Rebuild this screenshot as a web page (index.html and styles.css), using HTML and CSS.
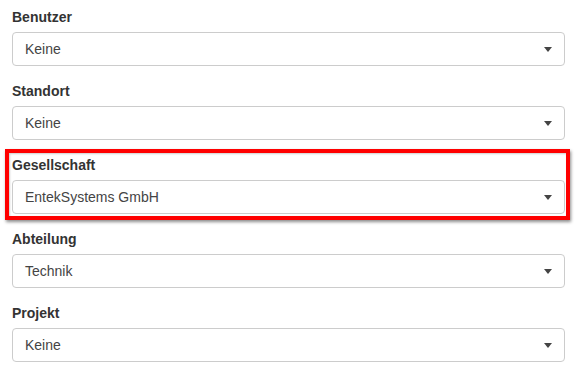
FILE: index.html
```html
<!DOCTYPE html>
<html lang="de">
<head>
  <meta charset="UTF-8" />
  <meta name="viewport" content="width=device-width, initial-scale=1.0"/>
  <title>Zuordnung</title>
  <link rel="stylesheet" href="styles.css">
</head>
<body>
  <form class="assign-form">
    <div class="form-group">
      <label>Benutzer</label>
      <div class="select-box"><span class="select-value">Keine</span><b class="select-arrow"></b></div>
    </div>
    <div class="form-group">
      <label>Standort</label>
      <div class="select-box"><span class="select-value">Keine</span><b class="select-arrow"></b></div>
    </div>
    <!-- markiertes Feld -->
    <div class="form-group highlight">
      <label>Gesellschaft</label>
      <div class="select-box"><span class="select-value">EntekSystems GmbH</span><b class="select-arrow"></b></div>
    </div>
    <div class="form-group">
      <label>Abteilung</label>
      <div class="select-box"><span class="select-value">Technik</span><b class="select-arrow"></b></div>
    </div>
    <div class="form-group">
      <label>Projekt</label>
      <div class="select-box"><span class="select-value">Keine</span><b class="select-arrow"></b></div>
    </div>
  </form>
</body>
</html>
```

FILE: styles.css
```css
body {
  margin: 0;
  padding: 0;
  background: #fff;
  font-family: "Liberation Sans", Arial, sans-serif;
  font-size: 14px;
  color: #333;
}
.assign-form {
  padding: 7px 12px 0 12px;
}
.form-group {
  margin-bottom: 15px;
  position: relative;
}
.form-group label {
  display: block;
  font-weight: bold;
  line-height: 20px;
  margin-bottom: 5px;
}
.select-box {
  position: relative;
  height: 34px;
  box-sizing: border-box;
  border: 1px solid #ccc;
  border-radius: 4px;
  background: #fff;
  padding: 0 24px 0 12px;
  display: flex;
  align-items: center;
}
.select-value {
  color: #444;
  line-height: 20px;
}
.select-arrow {
  position: absolute;
  right: 12px;
  top: 50%;
  margin-top: -2px;
  width: 0;
  height: 0;
  border-style: solid;
  border-width: 5px 4px 0 4px;
  border-color: #444 transparent transparent transparent;
}
.highlight::after {
  content: "";
  position: absolute;
  left: -7px;
  right: -5px;
  top: -6px;
  bottom: -6px;
  border: 4px solid #f00;
  box-shadow: 1px 2px 3px rgba(0,0,0,0.45), inset 1px 1px 2px rgba(0,0,0,0.2);
  pointer-events: none;
}
```
